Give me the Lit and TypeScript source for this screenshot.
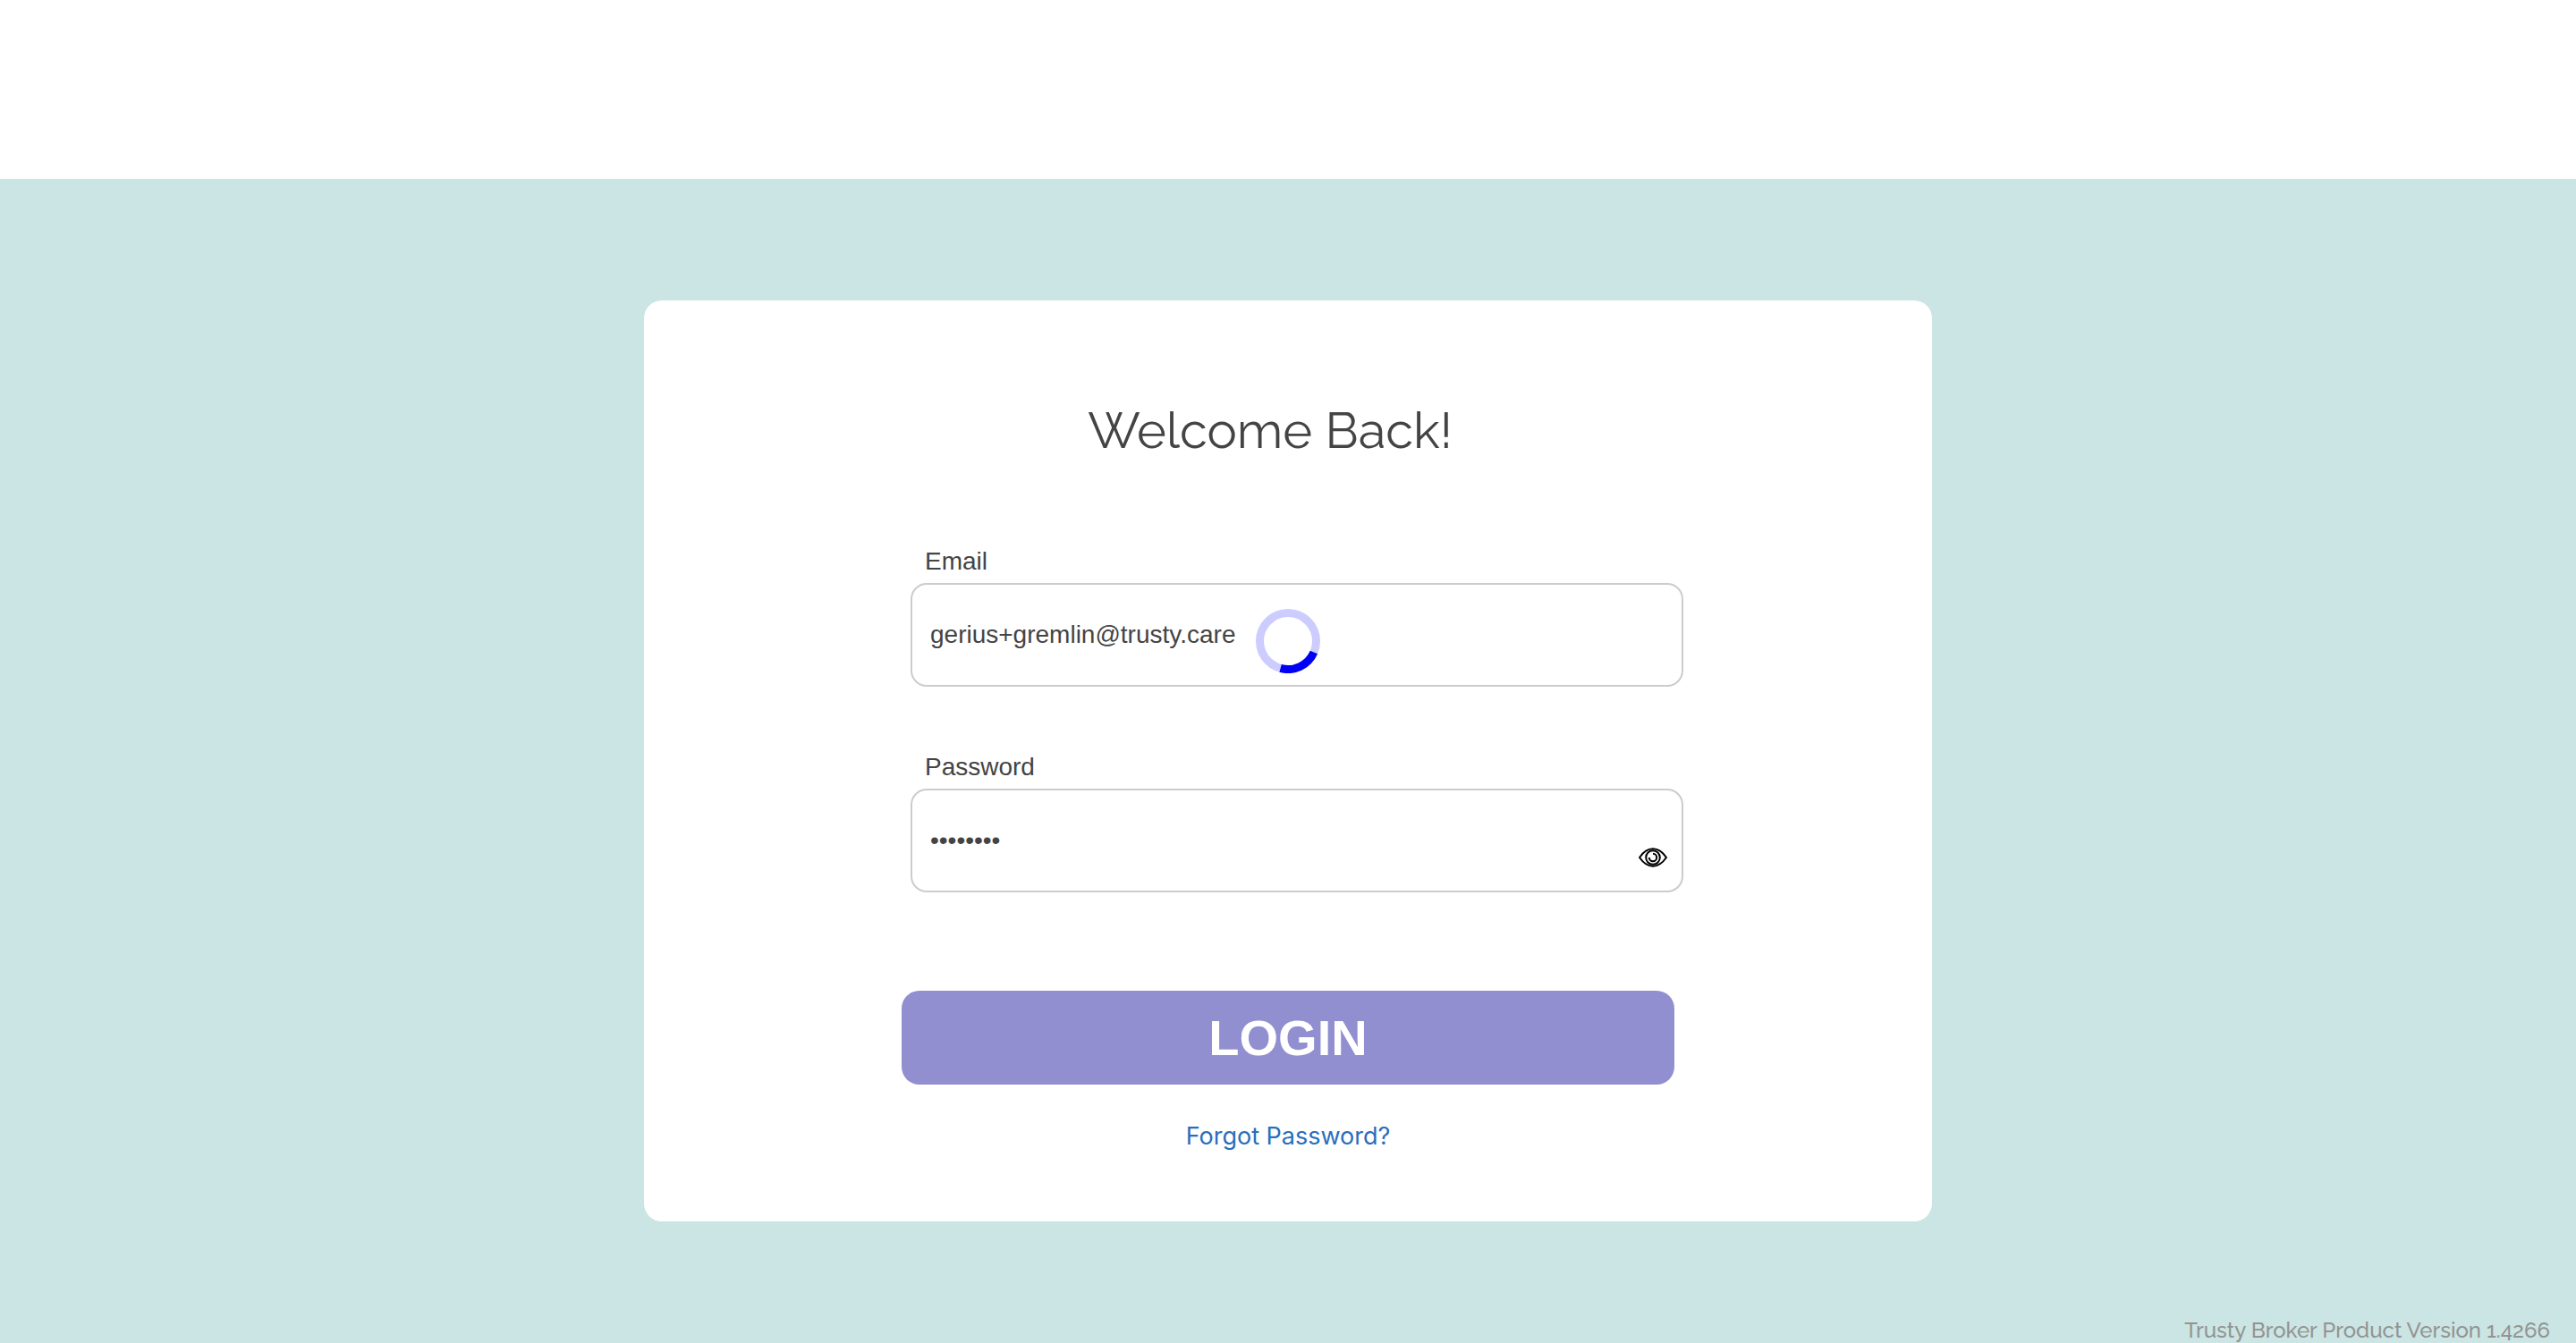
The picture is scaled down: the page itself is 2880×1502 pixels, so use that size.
import { LitElement, html, css } from "lit";
import { customElement, state } from "lit/decorators.js";

@customElement("loading-ring")
export class LoadingRing extends LitElement {
  static styles = css`
    :host {
      display: block;
      width: 72px;
      height: 72px;
    }
    .ring {
      display: block;
      width: 100%;
      height: 100%;
      fill: none;
      stroke-width: 9;
    }
    .track {
      stroke: #ccccff;
    }
    .arc {
      stroke: #0000f5;
    }
  `;

  render() {
    return html`
      <svg class="ring" viewBox="0 0 72 72" role="img" aria-label="Loading">
        <circle class="track" cx="36" cy="36" r="31.5" />
        <path class="arc" d="M64.9 48.5A31.5 31.5 0 0 1 27.6 66.4" />
      </svg>
    `;
  }
}

@customElement("app-root")
export class AppRoot extends LitElement {
  static styles = css`
    :host {
      display: block;
      font-family: "Liberation Sans", Arial, sans-serif;
      font-size: 28px;
      line-height: 32px;
      color: #444444;
    }
    *,
    *::before,
    *::after {
      box-sizing: border-box;
    }
    .page {
      display: flex;
      flex-direction: column;
      min-height: 100vh;
      background: #cae5e3;
    }
    .header {
      height: 200px;
      background: #ffffff;
    }
    .main {
      flex: 1;
      padding: 136px 0 80px;
    }
    .card {
      position: relative;
      display: flex;
      flex-direction: column;
      align-items: center;
      width: 50%;
      margin: 0 auto;
      padding: 113px 0 79px;
      border-radius: 20px;
      background: #ffffff;
    }
    .title {
      margin: 0 0 99px;
      padding-right: 40px;
      font: 400 56px/64px Raleway, sans-serif;
    }
    .form {
      display: flex;
      flex-direction: column;
      width: 60%;
    }
    .fields {
      display: flex;
      flex-direction: column;
      gap: 74px;
      margin: 0 -10px 110px 10px;
    }
    .field {
      display: flex;
      flex-direction: column;
      gap: 8px;
    }
    .label {
      padding-left: 16px;
    }
    .box {
      position: relative;
      display: flex;
    }
    .input {
      flex: 1;
      min-width: 0;
      height: 116px;
      padding: 0 20px;
      border: 2px solid #cccccc;
      border-radius: 18px;
      outline: none;
      background: #ffffff;
      color: inherit;
      font: inherit;
    }
    .reveal {
      position: absolute;
      right: 17px;
      bottom: 22px;
      width: 34px;
      height: 34px;
      padding: 0;
      border: 0;
      background: none;
      cursor: pointer;
    }
    .eye {
      display: block;
      width: 34px;
      height: 34px;
      fill: none;
      stroke: #000000;
      stroke-width: 2;
      stroke-linejoin: round;
    }
    .login {
      height: 105px;
      padding: 0;
      border: 0;
      border-radius: 20px;
      background: #918fd0;
      color: #ffffff;
      font: bold 56px/64px "Liberation Sans", Arial, sans-serif;
      cursor: pointer;
    }
    .forgot {
      margin-top: 42px;
      color: #2a6ebb;
      font: 400 27px/32px Inter, sans-serif;
      text-decoration: none;
    }
    .spinner {
      position: absolute;
      top: 345px;
      left: calc(50% - 36px);
    }
    .footer {
      padding-right: 29px;
      color: #939393;
      font: 500 24px/28px Raleway, sans-serif;
      text-align: right;
    }
  `;

  @state() private revealed = false;

  private toggleReveal() {
    this.revealed = !this.revealed;
  }

  private submit(event: Event) {
    event.preventDefault();
  }

  render() {
    return html`
      <div class="page">
        <header class="header"></header>
        <main class="main">
          <section class="card">
            <h1 class="title">Welcome Back!</h1>
            <form class="form" @submit=${this.submit}>
              <div class="fields">
                <div class="field">
                  <label class="label" for="email">Email</label>
                  <div class="box">
                    <input class="input" id="email" type="email" value="gerius+gremlin@trusty.care" />
                  </div>
                </div>
                <div class="field">
                  <label class="label" for="password">Password</label>
                  <div class="box">
                    <input
                      class="input"
                      id="password"
                      type=${this.revealed ? "text" : "password"}
                      value="password"
                    />
                    <button class="reveal" type="button" aria-label="Show password" @click=${this.toggleReveal}>
                      <svg class="eye" viewBox="0 0 34 34" aria-hidden="true">
                        <path d="M2 17C6.5 10.5 11 7.3 17 7.3S27.5 10.5 32 17C27.5 23.5 23 26.7 17 26.7S6.5 23.5 2 17Z" />
                        <circle cx="17" cy="17" r="7.8" />
                        <path d="M17 12.8A4.2 4.2 0 1 1 12.8 17" />
                      </svg>
                    </button>
                  </div>
                </div>
              </div>
              <button class="login" type="submit">LOGIN</button>
            </form>
            <a class="forgot" href="#forgot-password">Forgot Password?</a>
            <loading-ring class="spinner"></loading-ring>
          </section>
        </main>
        <footer class="footer">Trusty Broker Product Version 1.4266</footer>
      </div>
    `;
  }
}
